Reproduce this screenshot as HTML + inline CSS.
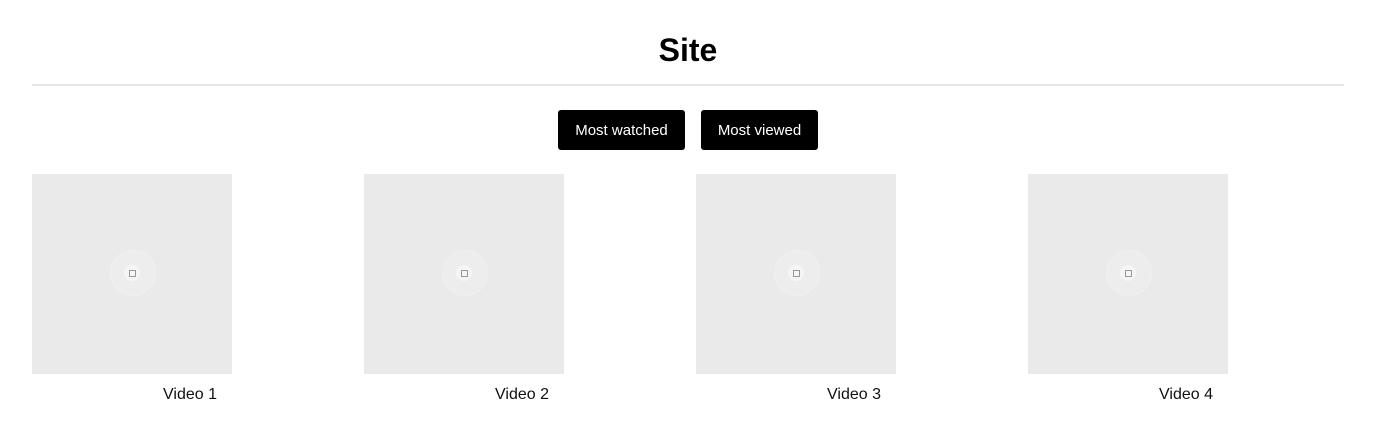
<!DOCTYPE html>
<html><head><style>
body{margin:0;background:#fff;font-family:"Liberation Sans",sans-serif;color:#000}
h1{position:absolute;top:30px;left:0;width:1376px;text-align:center;margin:0;font-size:32px;line-height:40px;font-weight:bold}
.hr{position:absolute;left:32px;top:84px;width:1312px;height:2px;background:#e5e5e5}
.btn{position:absolute;top:110px;height:40px;background:#000;color:#fff;border-radius:3px;font-size:15px;line-height:41px;text-align:center}
.card{position:absolute;top:174px;width:200px;height:200px;background:#eaeaea}
.card .c{position:absolute;left:78px;top:76px;width:44px;height:44px;border-radius:50%;background:#ededed;border:1px solid #f0f0f0}
.card .i{position:absolute;left:92px;top:91px;width:16px;height:16px;border-radius:50%;background:#f5f5f5}
.card .i:after{content:"";position:absolute;left:5px;top:5px;width:5px;height:5px;border:1px solid #999}
.cap{position:absolute;top:385px;width:316px;text-align:center;font-size:16px;line-height:20px;color:#111}
</style></head><body>
<h1>Site</h1>
<div class="hr"></div>
<div class="btn" style="left:558px;width:127px">Most watched</div>
<div class="btn" style="left:701px;width:117px">Most viewed</div>
<div class="card" style="left:32px"><div class="c"></div><div class="i"></div></div>
<div class="card" style="left:364px"><div class="c"></div><div class="i"></div></div>
<div class="card" style="left:696px"><div class="c"></div><div class="i"></div></div>
<div class="card" style="left:1028px"><div class="c"></div><div class="i"></div></div>
<div class="cap" style="left:32px">Video 1</div>
<div class="cap" style="left:364px">Video 2</div>
<div class="cap" style="left:696px">Video 3</div>
<div class="cap" style="left:1028px">Video 4</div>
</body></html>
